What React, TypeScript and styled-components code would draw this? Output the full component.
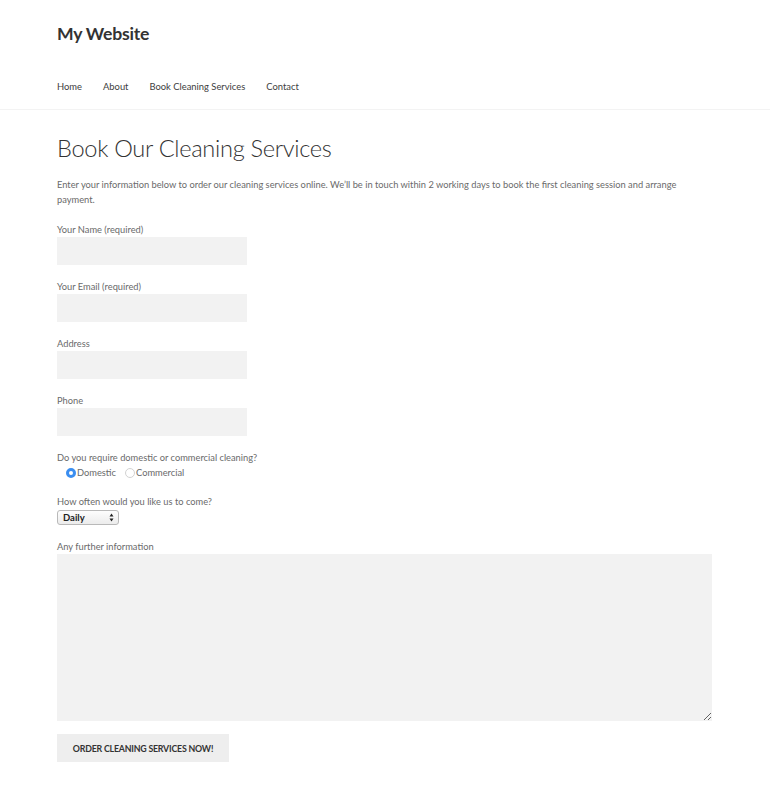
import React from "react";
import styled, { createGlobalStyle } from "styled-components";

const Global = createGlobalStyle`
  html, body { margin: 0; padding: 0; background: #fff; }
  body { font-family: Lato, "Open Sans", sans-serif; color: #6a6a6a; }
  * { box-sizing: border-box; }
`;

const Header = styled.header`
  border-bottom: 1px solid #f3f3f3;
  padding: 22px 57px 0;
`;

const SiteTitle = styled.div`
  font-family: Lato, sans-serif;
  font-weight: 700;
  font-size: 17.6px;
  color: #333;
  line-height: 24px;
  letter-spacing: -0.2px;
`;

const Nav = styled.nav`
  display: flex;
  gap: 21px;
  padding: 34px 0 15px;
`;

const NavLink = styled.a`
  font-size: 9.4px;
  color: #404040;
  line-height: 14px;
  text-decoration: none;
`;

const Main = styled.main`
  padding: 23px 57px 30px;
`;

const Heading = styled.h1`
  margin: 0;
  font-weight: 300;
  font-size: 23.6px;
  color: #333;
  line-height: 30px;
  letter-spacing: -0.3px;
`;

const Intro = styled.p`
  margin: 14px 0 0;
  font-size: 9.3px;
  line-height: 15px;
  max-width: 640px;
`;

const Form = styled.form`
  display: flex;
  flex-direction: column;
  margin-top: 16px;
`;

const Field = styled.div<{ $gap?: number }>`
  display: flex;
  flex-direction: column;
  align-items: flex-start;
  margin-bottom: ${(p) => p.$gap ?? 15}px;
`;

const Label = styled.label`
  font-size: 9.3px;
  line-height: 14px;
  color: #6a6a6a;
`;

const TextInput = styled.input`
  width: 190px;
  height: 28px;
  border: none;
  background: #f2f2f2;
`;

const RadioRow = styled.div`
  display: flex;
  align-items: center;
  padding-left: 9px;
  margin-top: 1px;
  font-size: 9.3px;
  line-height: 14px;
`;

const RadioOption = styled.span`
  display: inline-flex;
  align-items: center;
  margin-right: 9px;
`;

const RadioDot = styled.span<{ $on?: boolean }>`
  width: 10px;
  height: 10px;
  border-radius: 50%;
  margin-right: 1px;
  ${(p) =>
    p.$on
      ? `background: #fff; border: 3px solid #3b8ef0;`
      : `background: #fff; border: 1px solid #d2d2d2;`}
`;

const Select = styled.div`
  margin-top: 1px;
  width: 62px;
  height: 15px;
  border: 1px solid #b9b9b9;
  border-radius: 3px;
  background: linear-gradient(#fdfdfd, #ececec);
  display: flex;
  align-items: center;
  justify-content: space-between;
  padding: 0 4px 0 5px;
  font-size: 9.5px;
  color: #222;
  font-weight: 700;
`;

const Arrows = styled.svg`
  width: 5px;
  height: 9px;
`;

const TextArea = styled.textarea`
  width: 655px;
  height: 167px;
  border: none;
  background: #f2f2f2;
  resize: vertical;
`;

const Button = styled.button`
  margin-top: 13px;
  align-self: flex-start;
  width: 172px;
  height: 28px;
  border: none;
  background: #eeeeee;
  font-family: Lato, sans-serif;
  font-weight: 700;
  font-size: 8.8px;
  color: #333;
  text-transform: uppercase;
  letter-spacing: -0.2px;
`;

export default function App() {
  return (
    <>
      <Global />
      <Header>
        <SiteTitle>My Website</SiteTitle>
        <Nav>
          <NavLink href="#">Home</NavLink>
          <NavLink href="#">About</NavLink>
          <NavLink href="#">Book Cleaning Services</NavLink>
          <NavLink href="#">Contact</NavLink>
        </Nav>
      </Header>
      <Main>
        <Heading>Book Our Cleaning Services</Heading>
        <Intro>
          Enter your information below to order our cleaning services online. We’ll be in touch within 2
          working days to book the first cleaning session and arrange payment.
        </Intro>
        <Form>
          <Field>
            <Label>Your Name (required)</Label>
            <TextInput />
          </Field>
          <Field>
            <Label>Your Email (required)</Label>
            <TextInput />
          </Field>
          <Field>
            <Label>Address</Label>
            <TextInput />
          </Field>
          <Field>
            <Label>Phone</Label>
            <TextInput />
          </Field>
          <Field>
            <Label>Do you require domestic or commercial cleaning?</Label>
            <RadioRow>
              <RadioOption>
                <RadioDot $on />
                Domestic
              </RadioOption>
              <RadioOption>
                <RadioDot />
                Commercial
              </RadioOption>
            </RadioRow>
          </Field>
          <Field>
            <Label>How often would you like us to come?</Label>
            <Select>
              Daily
              <Arrows viewBox="0 0 5 9">
                <path d="M2.5 0.5 L4.5 3.5 H0.5 Z M2.5 8.5 L4.5 5.5 H0.5 Z" fill="#222" />
              </Arrows>
            </Select>
          </Field>
          <Field $gap={0}>
            <Label>Any further information</Label>
            <TextArea />
          </Field>
          <Button type="button">Order Cleaning Services Now!</Button>
        </Form>
      </Main>
    </>
  );
}
